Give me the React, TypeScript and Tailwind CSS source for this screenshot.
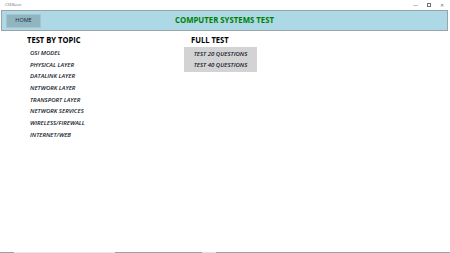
import React, { FC } from "react";

const topics = [
  "OSI MODEL",
  "PHYSICAL LAYER",
  "DATALINK LAYER",
  "NETWORK LAYER",
  "TRANSPORT LAYER",
  "NETWORK SERVICES",
  "WIRELESS/FIREWALL",
  "INTERNET/WEB",
];

const App: FC = () => {
  return (
    <div
      className="w-[450px] h-[253px] bg-white flex flex-col overflow-hidden"
      style={{ fontFamily: '"Open Sans", "Noto Sans", sans-serif' }}
    >
      {/* title bar */}
      <div className="h-[10px] flex items-center justify-between pl-[5px] pr-[6px]">
        <span className="text-[4px] text-gray-500 leading-none">CSEBasic</span>
        <div className="flex items-center gap-[9px] text-[5px] text-gray-500 leading-none">
          <span>—</span>
          <span className="w-[4px] h-[4px] border border-gray-500"></span>
          <span>✕</span>
        </div>
      </div>

      {/* header */}
      <div className="mx-[1px] mr-[2px] h-[21px] bg-[#add8e6] border border-[#9aa4a8] flex items-center relative">
        <button className="ml-[4px] w-[35px] h-[14px] bg-[#8fb5bf] border border-[#a7c3cb] text-[5.5px] text-gray-800 leading-none">
          HOME
        </button>
        <div className="absolute inset-0 flex items-center justify-center">
          <span className="text-[7.8px] font-bold text-[#008000] leading-none scale-y-110">COMPUTER SYSTEMS TEST</span>
        </div>
      </div>

      {/* body */}
      <div className="flex flex-1">
        <div className="ml-[27px] w-[157px] pt-[3px]">
          <h2 className="text-[7.6px] font-bold text-black leading-[12px] scale-y-110 origin-left">TEST BY TOPIC</h2>
          <div className="flex flex-col ml-[3px] mt-[1px]">
            {topics.map((t) => (
              <button
                key={t}
                className="text-left h-[11.7px] text-[6px] italic font-semibold text-gray-900 leading-none"
              >
                {t}
              </button>
            ))}
          </div>
        </div>
        <div className="pt-[3px]">
          <h2 className="ml-[7px] text-[7.6px] font-bold text-black leading-[12px] scale-y-110 origin-left">FULL TEST</h2>
          <div className="w-[73px] mt-[1px] bg-[#d3d3d3] flex flex-col items-center py-[1px]">
            <button className="h-[11.5px] text-[6px] italic font-semibold text-gray-900 leading-none">
              TEST 20 QUESTIONS
            </button>
            <button className="h-[11.5px] text-[6px] italic font-semibold text-gray-900 leading-none">
              TEST 40 QUESTIONS
            </button>
          </div>
        </div>
      </div>

      {/* bottom strip */}
      <div className="h-[1px] flex">
        <div className="w-[14px] bg-[#a0a0a0]"></div>
        <div className="w-[101px] bg-[#e8e8e8]"></div>
        <div className="w-[87px] bg-[#a0a0a0]"></div>
        <div className="w-[14px] bg-[#e0e0e0]"></div>
        <div className="flex-1 bg-[#a0a0a0]"></div>
      </div>
    </div>
  );
};

export default App;
